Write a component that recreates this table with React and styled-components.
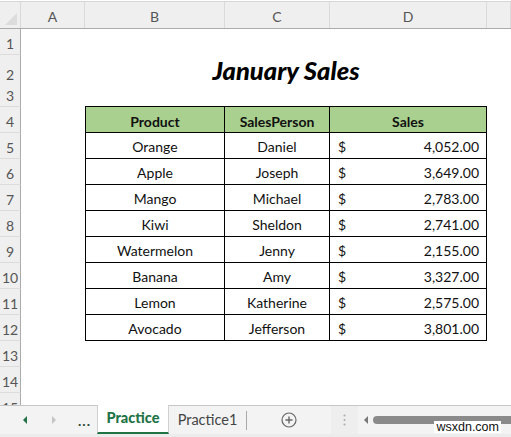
import React from "react";
import styled, { createGlobalStyle } from "styled-components";

const Global = createGlobalStyle`
  html, body { margin: 0; padding: 0; background: #fff; }
  body { font-family: Lato, "Open Sans", sans-serif; }
`;

const COLS = "21px 64px 140px 105px 157px 1fr";

const Window = styled.div`
  width: 511px;
  height: 437px;
  position: relative;
  overflow: hidden;
  background: #fff;
  display: flex;
  flex-direction: column;
`;

const Sheet = styled.div`
  flex: 1;
  overflow: hidden;
  padding-top: 1px;
`;

const ColHeaderRow = styled.div`
  display: grid;
  grid-template-columns: ${COLS};
  height: 28px;
  box-sizing: border-box;
  border-top: 1px solid #d6d6d6;
  border-bottom: 1px solid #ababab;
  background: #efefef;
`;

const Corner = styled.div`
  position: relative;
  border-right: 1px solid #d8d8d8;
  &::after {
    content: "";
    position: absolute;
    right: 3px;
    bottom: 3px;
    width: 0;
    height: 0;
    border-left: 12px solid transparent;
    border-bottom: 12px solid #dcdcdc;
  }
`;

const ColLabel = styled.div`
  display: flex;
  align-items: center;
  justify-content: center;
  font-size: 14px;
  color: #555;
  border-right: 1px solid #dadada;
  padding-top: 2px;
`;

const Row = styled.div`
  display: grid;
  grid-template-columns: ${COLS};
  height: 26px;
`;

const RowLabel = styled.div`
  display: flex;
  align-items: center;
  justify-content: center;
  font-size: 14px;
  color: #555;
  background: #efefef;
  border-right: 1px solid #ababab;
  border-bottom: 1px solid #dcdcdc;
  box-sizing: border-box;
  padding-top: 4px;
`;

const Cell = styled.div`
  box-sizing: border-box;
  display: flex;
  align-items: center;
  justify-content: ${(p) => (p.$split ? "space-between" : "center")};
  font-size: 14px;
  color: #111;
  padding: ${(p) => (p.$split ? "3px 7px 0 8px" : "3px 0 0 0")};
  background: ${(p) => (p.$head ? "#a9d08e" : "transparent")};
  font-weight: ${(p) => (p.$head ? 700 : 400)};
  ${(p) =>
    p.$tbl &&
    `border-right: 1px solid #000; border-bottom: 1px solid #000; margin-top: -1px; height: 27px;`}
  ${(p) => p.$first && `border-left: 1px solid #000;`}
  ${(p) => p.$head && `border-top: 1px solid #000;`}
`;

const Title = styled.div`
  grid-column: 3 / 6;
  display: flex;
  align-items: center;
  justify-content: center;
  padding: 0 0 5px 0;
  font-size: 25.5px;
  font-weight: 900;
  font-style: italic;
  color: #000;
`;

const TabBar = styled.div`
  position: absolute;
  left: 0;
  right: 0;
  bottom: 0;
  height: 32px;
  box-sizing: border-box;
  border-top: 1px solid #c6c6c6;
  background: #f3f3f3;
  display: flex;
  align-items: stretch;
`;

const NavArea = styled.div`
  width: 97px;
  display: flex;
  align-items: center;
  padding-bottom: 4px;
  box-sizing: border-box;
`;

const Arrow = styled.span`
  width: 0;
  height: 0;
  border-top: 4px solid transparent;
  border-bottom: 4px solid transparent;
  ${(p) =>
    p.$dir === "left"
      ? `border-right: 4px solid ${p.$color};`
      : `border-left: 4px solid ${p.$color};`}
  margin-left: ${(p) => p.$ml}px;
`;

const Ellipsis = styled.span`
  margin-left: 22px;
  font-size: 14px;
  font-weight: 700;
  color: #2b4a35;
  letter-spacing: 1px;
  padding-top: 2px;
`;

const Tab = styled.div`
  display: flex;
  align-items: center;
  justify-content: center;
  box-sizing: border-box;
  width: ${(p) => p.$w}px;
  margin-top: -1px;
  padding-bottom: 3px;
  font-size: 14.5px;
  background: ${(p) => (p.$active ? "#fff" : "transparent")};
  color: ${(p) => (p.$active ? "#217346" : "#444")};
  font-weight: ${(p) => (p.$active ? 900 : 400)};
  border-bottom: ${(p) => (p.$active ? "2px solid #217346" : "none")};
  height: ${(p) => (p.$active ? "29px" : "auto")};
  ${(p) => p.$active && `border-left: 1px solid #d0d0d0; border-right: 1px solid #d0d0d0;`}
`;

const Sep = styled.div`
  width: 1px;
  background: #a8a8a8;
  margin: 5px 0 7px 0;
`;

const AddWrap = styled.div`
  width: 84px;
  display: flex;
  align-items: center;
  justify-content: center;
  padding-bottom: 4px;
`;

const Grip = styled.div`
  width: 27px;
  display: flex;
  align-items: center;
  justify-content: center;
  padding-bottom: 4px;
  background: #eeeeee;
`;

const Scroll = styled.div`
  flex: 1;
  display: flex;
  align-items: center;
  padding-bottom: 4px;
  position: relative;
`;

const Thumb = styled.div`
  flex: 1;
  height: 8px;
  margin-left: 5px;
  border-radius: 4px 0 0 4px;
  background: #8a8a8a;
`;

const Watermark = styled.span`
  position: absolute;
  right: 10px;
  bottom: 4px;
  background: #fff;
  color: #111;
  font-family: "Liberation Sans", Arial, sans-serif;
  font-size: 12.5px;
  line-height: 12px;
  padding: 0 2px;
`;

const BottomStrip = styled.div`
  position: absolute;
  left: 0;
  right: 0;
  bottom: 0;
  height: 3px;
  background: #ececec;
`;

const data = [
  ["Orange", "Daniel", "4,052.00"],
  ["Apple", "Joseph", "3,649.00"],
  ["Mango", "Michael", "2,783.00"],
  ["Kiwi", "Sheldon", "2,741.00"],
  ["Watermelon", "Jenny", "2,155.00"],
  ["Banana", "Amy", "3,327.00"],
  ["Lemon", "Katherine", "2,575.00"],
  ["Avocado", "Jefferson", "3,801.00"],
];

export default function App() {
  return (
    <>
      <Global />
      <Window>
        <Sheet>
          <ColHeaderRow>
            <Corner />
            {["A", "B", "C", "D", ""].map((c, i) => (
              <ColLabel key={i}>{c}</ColLabel>
            ))}
          </ColHeaderRow>
          <Row>
            <RowLabel>1</RowLabel>
          </Row>
          <Row>
            <RowLabel>2</RowLabel>
            <div />
            <Title>January Sales</Title>
          </Row>
          <Row>
            <RowLabel>3</RowLabel>
          </Row>
          <Row>
            <RowLabel>4</RowLabel>
            <div />
            <Cell $tbl $head $first>Product</Cell>
            <Cell $tbl $head>SalesPerson</Cell>
            <Cell $tbl $head>Sales</Cell>
          </Row>
          {data.map((d, i) => (
            <Row key={i}>
              <RowLabel>{i + 5}</RowLabel>
              <div />
              <Cell $tbl $first>{d[0]}</Cell>
              <Cell $tbl>{d[1]}</Cell>
              <Cell $tbl $split>
                <span>$</span>
                <span>{d[2]}</span>
              </Cell>
            </Row>
          ))}
          {[13, 14, 15].map((n) => (
            <Row key={n}>
              <RowLabel>{n}</RowLabel>
            </Row>
          ))}
        </Sheet>
        <TabBar>
          <NavArea>
            <Arrow $dir="left" $color="#217346" $ml={23} />
            <Arrow $dir="right" $color="#c4c4c4" $ml={25} />
            <Ellipsis>...</Ellipsis>
          </NavArea>
          <Tab $active $w={72}>Practice</Tab>
          <Tab $w={77}>Practice1</Tab>
          <Sep />
          <AddWrap>
            <svg width="16" height="16" viewBox="0 0 16 16">
              <circle cx="8" cy="8" r="7" fill="none" stroke="#666" strokeWidth="1.2" />
              <path d="M8 4.5v7M4.5 8h7" stroke="#666" strokeWidth="1.4" />
            </svg>
          </AddWrap>
          <Grip>
            <svg width="3" height="12" viewBox="0 0 3 12">
              <circle cx="1.5" cy="1.5" r="1" fill="#aaa" />
              <circle cx="1.5" cy="6" r="1" fill="#aaa" />
              <circle cx="1.5" cy="10.5" r="1" fill="#aaa" />
            </svg>
          </Grip>
          <Scroll>
            <Arrow $dir="left" $color="#777" $ml={6} />
            <Thumb />
            <Watermark>wsxdn.com</Watermark>
          </Scroll>
          <BottomStrip />
        </TabBar>
      </Window>
    </>
  );
}
